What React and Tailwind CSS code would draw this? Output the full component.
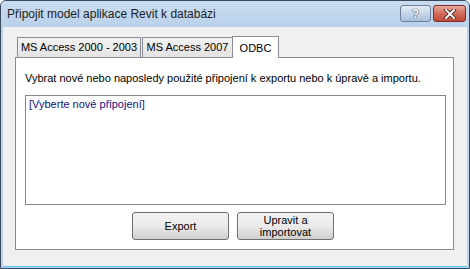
export default function App() {
  return (
    <div className="w-[470px] h-[269px] flex flex-col bg-[#b9d1ea] border border-[#3a4a5c] rounded-t-[6px] overflow-hidden font-['Liberation_Sans',Arial,sans-serif] text-[11px] text-black">
      {/* Title bar */}
      <div className="h-[26px] shrink-0 flex items-center pl-[6px] pr-[3px] bg-gradient-to-b from-[#c9dcf0] to-[#b9d1ea]">
        <span className="flex-1 text-[12px] leading-none text-[#1e1e1e]">Připojit model aplikace Revit k databázi</span>
        <div className="flex gap-[2px] -mt-[1px]">
          <div className="w-[31px] h-[17px] rounded-[3px] border border-[#6d7f98] bg-gradient-to-b from-[#e3ecf6] via-[#c6d6e9] to-[#a9c0da] flex items-center justify-center">
            <span className="text-[12px] font-bold text-white leading-none [text-shadow:0_0_1px_#333,0_0_1px_#333]">?</span>
          </div>
          <div className="w-[33px] h-[17px] rounded-[3px] border border-[#7d2a22] bg-gradient-to-b from-[#e8a89c] via-[#d36b5c] to-[#c24a3a] flex items-center justify-center">
            <svg width="14" height="10" viewBox="0 0 14 10">
              <path d="M3 1 L11 9 M11 1 L3 9" stroke="#3a1a15" strokeWidth="3.6" strokeLinecap="square" />
              <path d="M3 1 L11 9 M11 1 L3 9" stroke="#ffffff" strokeWidth="2" strokeLinecap="square" />
            </svg>
          </div>
        </div>
      </div>

      {/* Client area */}
      <div className="flex-1 mx-[2px] mb-[1px] bg-[#f0f0f0] border-b border-[#5ac8f0] flex flex-col pl-[12px] pr-[13px] pt-[9px]">
        {/* Tabs */}
        <div className="flex items-end h-[21px] pl-[2px] relative z-10">
          <div className="h-[20px] w-[124px] flex items-center justify-center border border-b-0 border-[#898c95] bg-gradient-to-b from-[#f2f2f2] to-[#e3e3e3]">MS Access 2000 - 2003</div>
          <div className="h-[20px] w-[91px] ml-[1px] flex items-center justify-center border border-b-0 border-[#898c95] bg-gradient-to-b from-[#f2f2f2] to-[#e3e3e3]">MS Access 2007</div>
          <div className="h-[22px] w-[47px] -ml-[1px] -mb-[1px] flex items-start justify-center pt-[3px] border border-b-0 border-[#898c95] bg-white">ODBC</div>
        </div>
        {/* Panel */}
        <div className="h-[193px] border border-[#898c95] bg-white flex flex-col pl-[9px] pr-[7px] pt-[14px]">
          <div className="leading-[13px]">Vybrat nové nebo naposledy použité připojení k exportu nebo k úpravě a importu.</div>
          <div className="mt-[10px] h-[110px] border border-[#828790] bg-white px-[3px] pt-[2px] text-[#12128a] leading-[13px]">[Vyberte nové připojení]</div>
          <div className="flex justify-center gap-[8px] mt-[7px] pr-[5px]">
            <button className="w-[97px] h-[28px] rounded-[3px] border border-[#707070] bg-gradient-to-b from-[#f2f2f2] via-[#ebebeb] to-[#cfcfcf] text-[11px] leading-[12px]">Export</button>
            <button className="w-[97px] h-[28px] rounded-[3px] border border-[#707070] bg-gradient-to-b from-[#f2f2f2] via-[#ebebeb] to-[#cfcfcf] text-[11px] leading-[12px]">Upravit a<br />importovat</button>
          </div>
        </div>
      </div>
    </div>
  );
}
